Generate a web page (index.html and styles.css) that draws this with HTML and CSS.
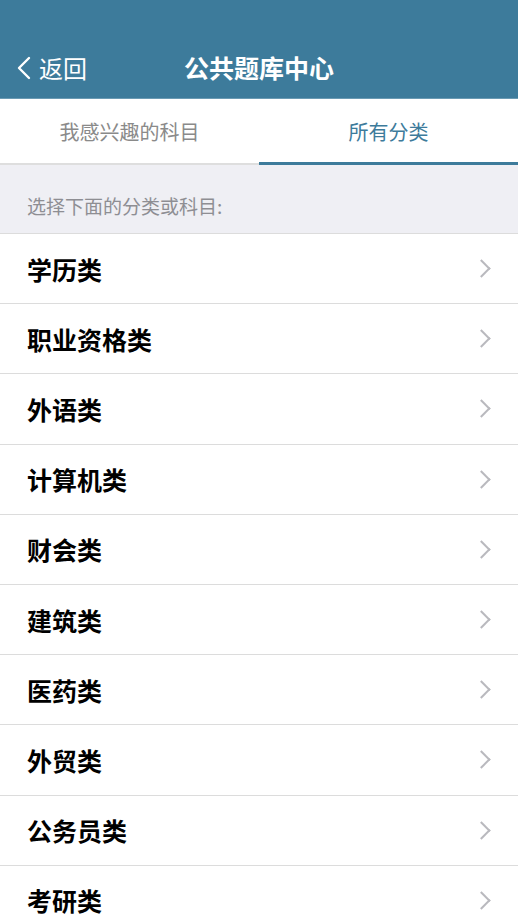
FILE: index.html
```html
<!DOCTYPE html>
<html lang="zh-CN">
<head>
    <meta charset="UTF-8">
    <meta name="viewport" content="width=device-width, initial-scale=1.0">
    <title>公共题库中心</title>
    <link rel="stylesheet" href="styles.css">
</head>
<body>

    <header class="topbar">
        <a class="back" href="#">
            <svg class="back-icon" width="14" height="24" viewBox="0 0 14 24">
                <path d="M12 2 L2 12 L12 22" fill="none" stroke="#fff" stroke-width="2.4" stroke-linecap="round" stroke-linejoin="round"/>
            </svg>
            <span>返回</span>
        </a>
        <h1 class="title">公共题库中心</h1>
    </header>

    <nav class="tabs">
        <div class="tab">我感兴趣的科目</div>
        <div class="tab active">所有分类</div>
    </nav>

    <div class="section-tip">选择下面的分类或科目:</div>

    <ul class="list">
        <li class="item"><span>学历类</span><i class="arrow"></i></li>
        <li class="item"><span>职业资格类</span><i class="arrow"></i></li>
        <li class="item"><span>外语类</span><i class="arrow"></i></li>
        <li class="item"><span>计算机类</span><i class="arrow"></i></li>
        <li class="item"><span>财会类</span><i class="arrow"></i></li>
        <li class="item"><span>建筑类</span><i class="arrow"></i></li>
        <li class="item"><span>医药类</span><i class="arrow"></i></li>
        <li class="item"><span>外贸类</span><i class="arrow"></i></li>
        <li class="item"><span>公务员类</span><i class="arrow"></i></li>
        <li class="item"><span>考研类</span><i class="arrow"></i></li>
    </ul>

</body>
</html>
```

FILE: styles.css
```css
body {
    margin: 0;
    font-family: "Noto Sans CJK SC", "Noto Sans", sans-serif;
    background-color: #fff;
}

/* 顶部导航 */
.topbar {
    height: 99px;
    background-color: #3d7b9b;
    border-bottom: 1px solid #6a9ab3;
    display: flex;
    align-items: center;
    justify-content: center;
    padding-top: 36px;
    box-sizing: border-box;
    position: relative;
}
.back {
    position: absolute;
    left: 17px;
    top: 52px;
    display: flex;
    align-items: center;
    gap: 8px;
    color: #fff;
    text-decoration: none;
    font-size: 24px;
    line-height: 32px;
}
.title {
    margin: 0;
    color: #fff;
    font-size: 25px;
    font-weight: bold;
    line-height: 32px;
}

/* 标签页 */
.tabs {
    display: flex;
    height: 66px;
    background-color: #fff;
}
.tab {
    flex: 1;
    display: flex;
    align-items: center;
    justify-content: center;
    font-size: 20px;
    color: #8a8a8a;
    border-bottom: 2px solid #dedede;
    padding-top: 1px;
}
.tab.active {
    color: #3d7b9b;
    border-bottom: 3px solid #3d7b9b;
}

.section-tip {
    background-color: #efeff4;
    height: 69px;
    box-sizing: border-box;
    padding: 27px 0 0 27px;
    font-size: 19px;
    color: #8e8e93;
    border-bottom: 1px solid #dcdcdc;
}

/* 列表 */
.list {
    list-style: none;
    margin: 0;
    padding: 0;
}
.item {
    height: 69.2px;
    border-bottom: 1px solid #dcdcdc;
    display: flex;
    align-items: center;
    justify-content: space-between;
    padding: 0 28px 0 27px;
    font-size: 25px;
    font-weight: bold;
    color: #000;
}
.arrow {
    width: 11px;
    height: 11px;
    border-top: 2px solid #b9b9be;
    border-right: 2px solid #b9b9be;
    transform: rotate(45deg);
    margin-right: 2px;
}
```
